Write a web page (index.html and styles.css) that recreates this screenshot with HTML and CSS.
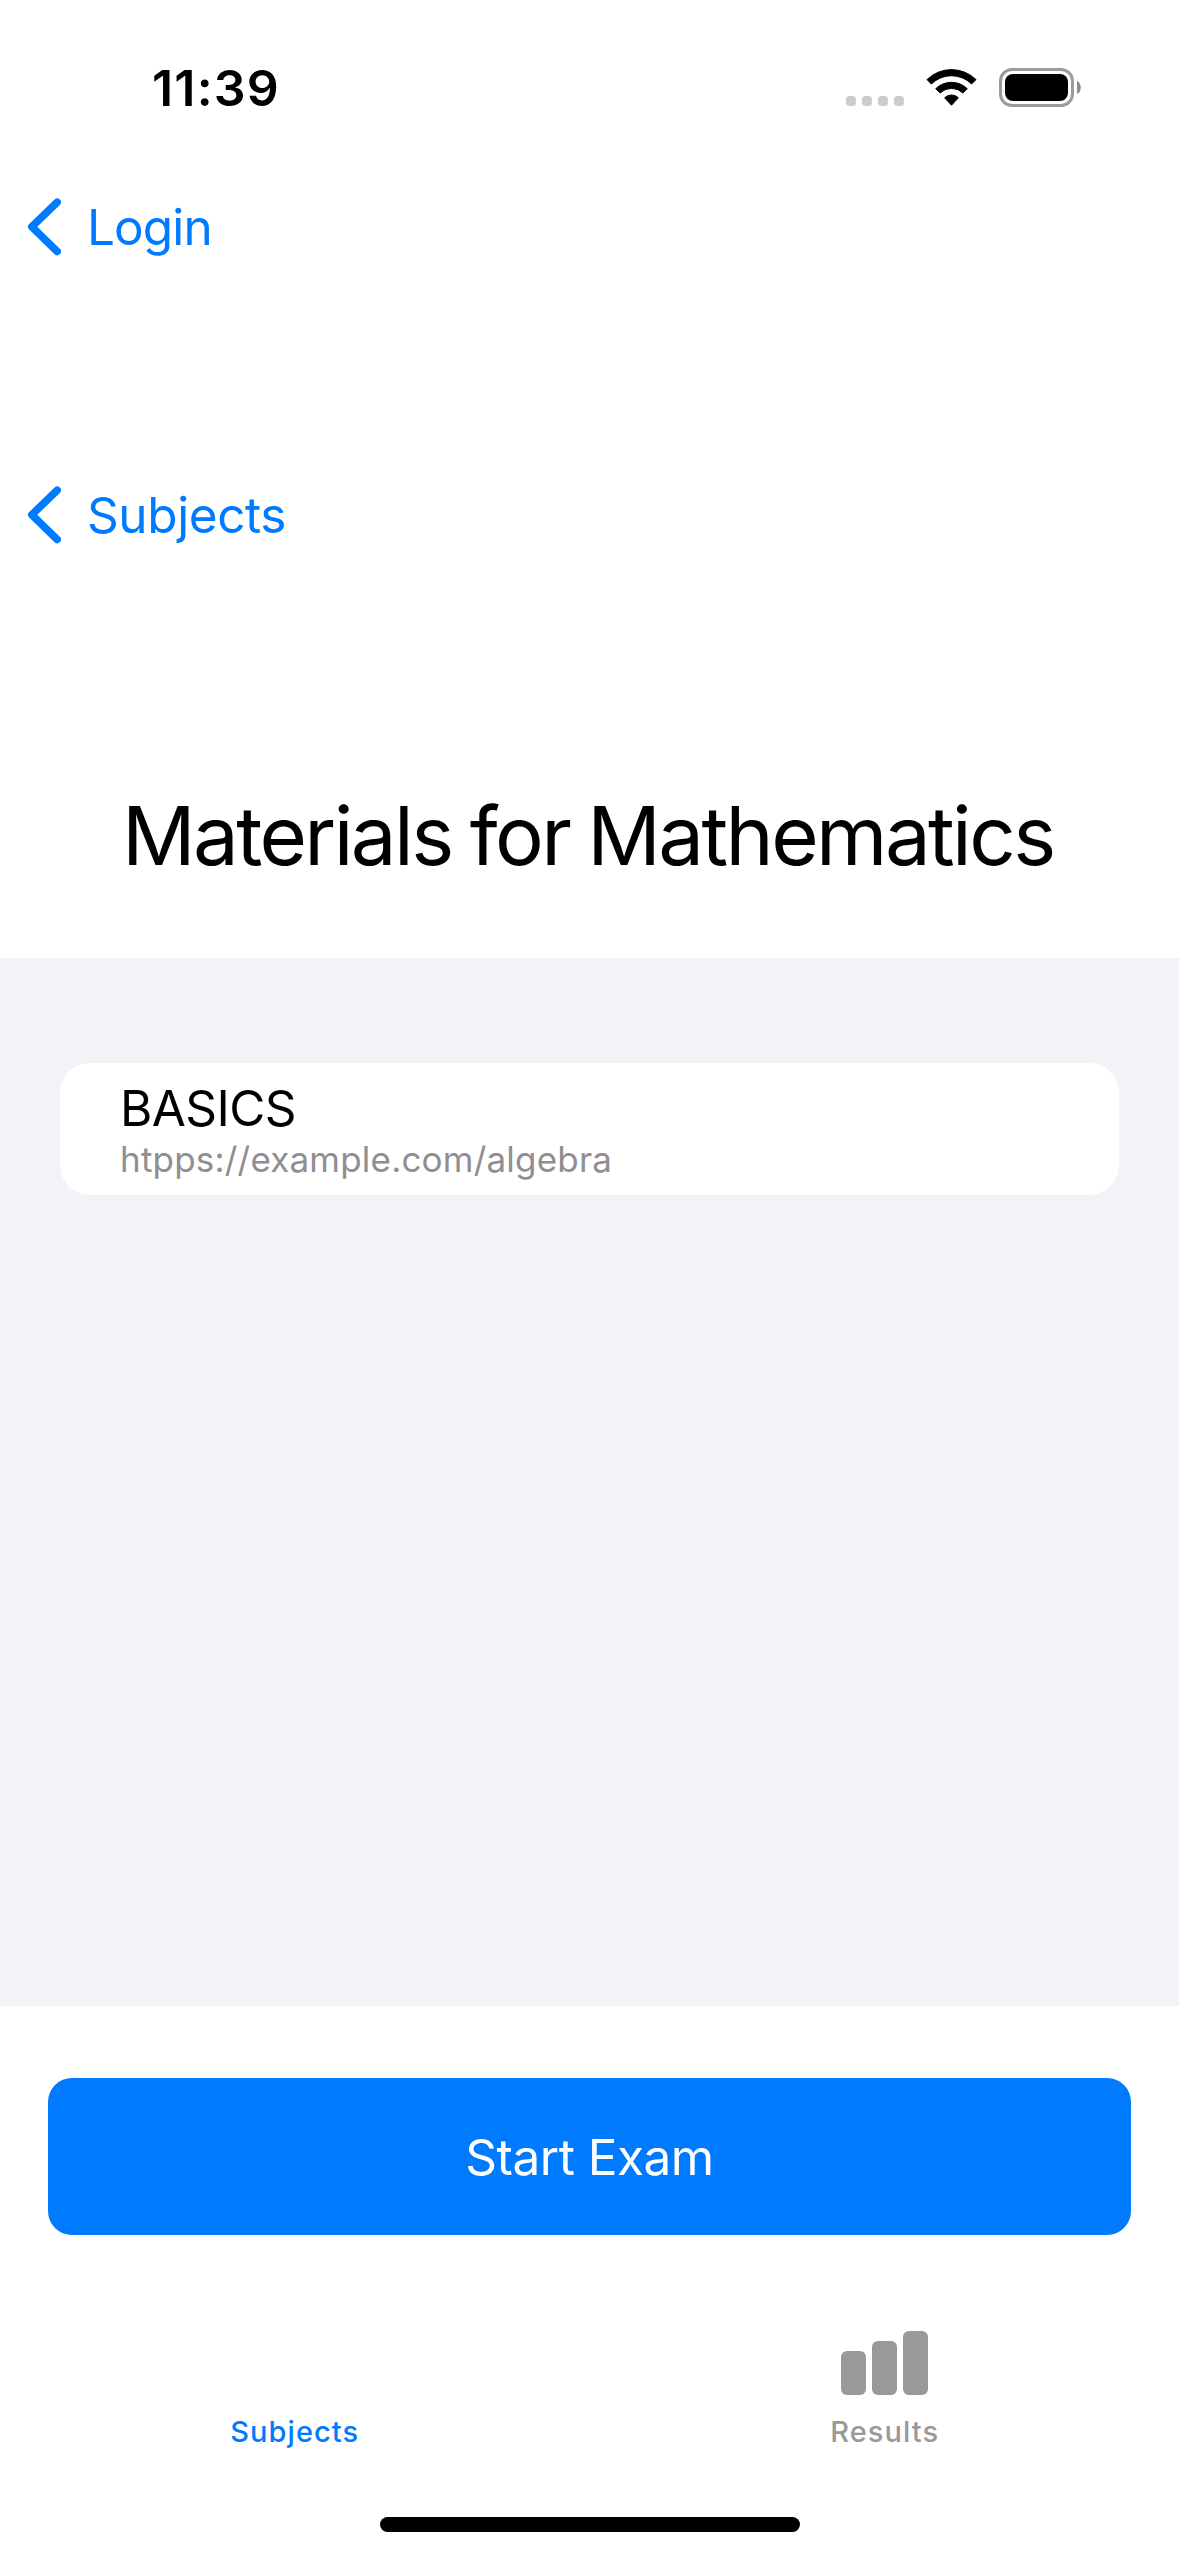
FILE: index.html
```html
<!DOCTYPE html>
<html lang="en">
<head>
<meta charset="utf-8">
<title>Materials for Mathematics</title>
<link rel="stylesheet" href="styles.css">
</head>
<body>
<div class="screen">
  <header class="status-bar">
    <span class="time">11:39</span>
    <div class="indicators">
      <svg class="signal" width="58" height="10" viewBox="0 0 58 10" fill="#cbcbcb">
        <rect width="10" height="10" rx="3.5"/>
        <rect x="16" width="10" height="10" rx="3.5"/>
        <rect x="32" width="10" height="10" rx="3.5"/>
        <rect x="48" width="10" height="10" rx="3.5"/>
      </svg>
      <svg class="wifi" width="51" height="38" viewBox="0 0 51 38" stroke="#000" stroke-width="1" stroke-linejoin="round">
        <path d="M1 10.6A35 35 0 0 1 50 10.6L45.6 15A28.6 28.6 0 0 0 5.4 15Z"/>
        <path d="M9.7 19.7A22.7 22.7 0 0 1 41.3 19.7L36.9 24A16.4 16.4 0 0 0 14.1 24Z"/>
        <path d="M18.6 28.8A9.8 9.8 0 0 1 32.4 28.8L25.5 36.2Z"/>
      </svg>
      <svg class="battery" width="82" height="39" viewBox="0 0 82 39">
        <rect x="1.5" y="1.5" width="72" height="36" rx="11.5" fill="none" stroke="#9b9b9b" stroke-width="3"/>
        <rect x="6" y="6" width="63" height="27" rx="8"/>
        <path d="M78 13C83 14.5 83 24.5 78 26Z" fill="#8c8c8c"/>
      </svg>
    </div>
  </header>

  <nav class="nav-bar">
    <a class="back">
      <svg width="34" height="58" viewBox="0 0 34 58"><path d="M30.2 4.2L4.8 28.8L30.2 53.4"/></svg>
      <span class="back-login">Login</span>
    </a>
  </nav>
  <nav class="nav-bar nested">
    <a class="back">
      <svg width="34" height="58" viewBox="0 0 34 58"><path d="M30.2 4.2L4.8 28.8L30.2 53.4"/></svg>
      <span class="back-subjects">Subjects</span>
    </a>
  </nav>

  <h1 class="title">Materials for Mathematics</h1>

  <main class="list">
    <article class="material">
      <div class="name">BASICS</div>
      <div class="link">htpps://example.com/algebra</div>
    </article>
  </main>

  <button class="start">Start Exam</button>

  <footer class="tab-bar">
    <a class="tab active"><span>Subjects</span></a>
    <a class="tab results">
      <svg width="88" height="64" viewBox="0 0 88 64" fill="#999">
        <rect y="20" width="25" height="44" rx="6"/>
        <rect x="31" y="10" width="25" height="54" rx="6"/>
        <rect x="62" width="25" height="64" rx="6"/>
      </svg>
      <span>Results</span>
    </a>
  </footer>
  <div class="home-indicator"></div>
</div>
</body>
</html>
```
FILE: styles.css
```css
* { box-sizing: border-box; }

body {
  margin: 0;
  background: #fff;
  color: #000;
  font-family: Inter, "Liberation Sans", sans-serif;
}

.screen {
  display: flex;
  flex-direction: column;
  width: 1179px;
  height: 2556px;
  overflow: hidden;
}

.status-bar {
  display: flex;
  justify-content: space-between;
  align-items: flex-start;
  height: 177px;
  padding: 58px 98px 0 152px;
}

.time {
  font-size: 50px;
  font-weight: 600;
  line-height: 60px;
  letter-spacing: 1.2px;
}

.indicators { display: flex; align-items: flex-start; }
.signal { margin-top: 38px; }
.wifi { margin: 11px 22px 0; }
.battery { margin-top: 10px; }

.nav-bar {
  display: flex;
  align-items: center;
  height: 100px;
  padding-left: 27px;
}

.nested { margin-top: 188px; }

.back {
  display: flex;
  align-items: center;
  gap: 26px;
  color: #007aff;
  font-size: 49.5px;
  line-height: 60px;
}

.back path {
  fill: none;
  stroke: #007aff;
  stroke-width: 7.6;
  stroke-linecap: round;
  stroke-linejoin: round;
}

.back-login { letter-spacing: -0.9px; }
.back-subjects { letter-spacing: -0.4px; }

.title {
  margin: 0;
  padding: 221px 0 73px 122px;
  font-size: 81.5px;
  font-weight: 400;
  line-height: 99px;
  letter-spacing: -2.6px;
  word-spacing: -2.2px;
  white-space: nowrap;
}

.list {
  height: 1048px;
  padding: 105px 60px 0;
  background: #f2f2f7;
}

.material {
  padding: 15px 60px;
  border-radius: 30px;
  background: #fff;
}

.name {
  font-size: 49.5px;
  line-height: 60px;
  letter-spacing: -0.6px;
}

.link {
  color: #8e8e93;
  font-size: 35px;
  line-height: 42px;
  letter-spacing: 0.2px;
}

.start {
  height: 157px;
  margin: 72px 48px 0;
  padding: 1px 0 0;
  border: 0;
  border-radius: 24px;
  background: #007aff;
  color: #fff;
  font: 400 49.5px/60px Inter, "Liberation Sans", sans-serif;
  letter-spacing: -0.5px;
}

.tab-bar {
  display: grid;
  grid-template-columns: 1fr 1fr;
  height: 214px;
  padding-top: 96px;
}

.tab {
  display: flex;
  flex-direction: column;
  justify-content: flex-end;
  align-items: center;
  gap: 19px;
  color: #999;
  font-size: 29px;
  font-weight: 500;
  line-height: 35px;
  letter-spacing: 1.05px;
}

.active { color: #007aff; }
.results { padding-left: 1px; }

.home-indicator {
  width: 420px;
  height: 15px;
  margin: 68px auto 0;
  border-radius: 8px;
  background: #000;
}
```
